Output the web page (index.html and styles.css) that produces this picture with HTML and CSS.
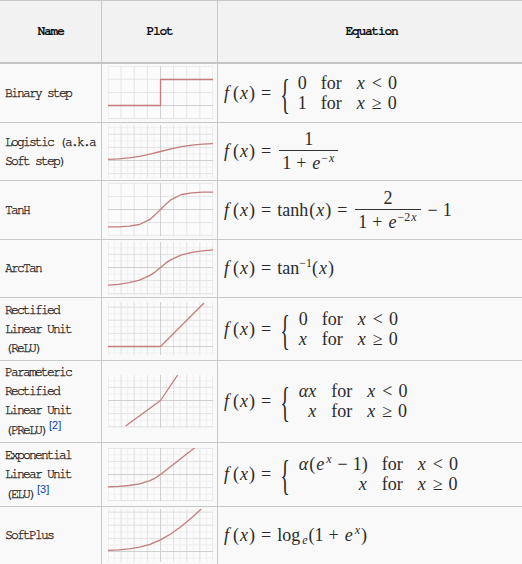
FILE: index.html
```html
<!DOCTYPE html>
<html>
<head>
<meta charset="utf-8" />
<title>Activation functions</title>
<link rel="stylesheet" href="styles.css">
</head>
<body>

<svg class="defs" width="0" height="0">
 <defs>
  <pattern id="minor" width="6.5625" height="6.5625" patternUnits="userSpaceOnUse">
   <rect width="1" height="6.5625" fill="#efefef"/>
   <rect width="6.5625" height="1" fill="#efefef"/>
  </pattern>
  <pattern id="major" width="13.125" height="13.125" patternUnits="userSpaceOnUse">
   <rect width="1" height="13.125" fill="#e3e3e3"/>
   <rect width="13.125" height="1" fill="#e3e3e3"/>
  </pattern>
 </defs>
</svg>

<table class="funcs">
<colgroup>
 <col class="c-name">
 <col class="c-plot">
 <col class="c-eq">
</colgroup>
<tr>
 <th>Name</th>
 <th>Plot</th>
 <th>Equation</th>
</tr>

<tr>
 <td class="name">Binary step</td>
 <td class="plot">
  <svg width="105" height="53" viewBox="0 0 105 53">
   <rect class="grid-major" x="-14" y="-14" width="135" height="81" transform="translate(12.625 12.75)"/>
   <path class="axis" d="M52.5 0V53M0 39.5H105"/>
   <path class="curve" d="M0 39.5H52.5V13.5H105"/>
  </svg>
 </td>
 <td class="eq">
  <span class="math"><span class="v f">f</span>(<span class="v">x</span>)<span class="rel">=</span>
   <span class="cases"><span class="brace">{</span>
    <span class="rows">
     <span>0</span><span>for</span><span><span class="v">x</span><span class="rel">&lt;</span>0</span>
     <span>1</span><span>for</span><span><span class="v">x</span><span class="rel">&ge;</span>0</span>
    </span>
   </span>
  </span>
 </td>
</tr>

<tr>
 <td class="name">Logistic (a.k.a<br>Soft step)</td>
 <td class="plot">
  <svg width="105" height="53" viewBox="0 0 105 53">
   <rect class="grid-minor" x="-14" y="-14" width="135" height="81" transform="translate(12.625 8.75)"/>
   <rect class="grid-major" x="-14" y="-14" width="135" height="81" transform="translate(12.625 8.75)"/>
   <path class="axis" d="M52.5 0V53M0 35.5H105"/>
   <polyline class="curve" points="0,34.3 10.5,33.8 21,32.8 31.5,31.3 42,29.1 52.5,26.5 63,23.9 73.5,21.7 84,20.2 94.5,19.2 105,18.7"/>
  </svg>
 </td>
 <td class="eq">
  <span class="math"><span class="v f">f</span>(<span class="v">x</span>)<span class="rel">=</span>
   <span class="frac"><span class="num">1</span><span class="den">1<span class="op">+</span><span class="v">e</span><sup>&minus;<span class="v">x</span></sup></span></span>
  </span>
 </td>
</tr>

<tr>
 <td class="name">TanH</td>
 <td class="plot">
  <svg width="105" height="53" viewBox="0 0 105 53">
   <rect class="grid-major" x="-14" y="-14" width="135" height="81" transform="translate(12.625 12.875)"/>
   <path class="axis" d="M52.5 0V53M0 26.5H105"/>
   <polyline class="curve" points="0,43.9 10.5,43.8 21,43.2 31.5,41.5 42,36.3 47,31.9 52.5,26.5 58,21.1 63,16.7 73.5,11.5 84,9.8 94.5,9.2 105,9.1"/>
  </svg>
 </td>
 <td class="eq">
  <span class="math"><span class="v f">f</span>(<span class="v">x</span>)<span class="rel">=</span><span class="fn">tanh</span>(<span class="v">x</span>)<span class="rel">=</span>
   <span class="frac"><span class="num">2</span><span class="den">1<span class="op">+</span><span class="v">e</span><sup>&minus;2<span class="v">x</span></sup></span></span><span class="op">&minus;</span>1
  </span>
 </td>
</tr>

<tr>
 <td class="name">ArcTan</td>
 <td class="plot">
  <svg width="105" height="53" viewBox="0 0 105 53">
   <rect class="grid-minor" x="-14" y="-14" width="135" height="81" transform="translate(12.625 11.875)"/>
   <rect class="grid-major" x="-14" y="-14" width="135" height="81" transform="translate(12.625 11.875)"/>
   <path class="axis" d="M52.5 0V53M0 25.5H105"/>
   <polyline class="curve" points="0,43.2 10.5,42.3 21,40.7 31.5,38.2 42,33.4 47,30.1 52.5,25.5 58,20.9 63,17.6 73.5,12.8 84,10.3 94.5,8.8 105,7.8"/>
  </svg>
 </td>
 <td class="eq">
  <span class="math"><span class="v f">f</span>(<span class="v">x</span>)<span class="rel">=</span><span class="fn">tan<sup>&minus;1</sup>(<span class="v">x</span>)</span></span>
 </td>
</tr>

<tr>
 <td class="name">Rectified<br>Linear Unit<br>(ReLU)</td>
 <td class="plot">
  <svg width="105" height="53" viewBox="0 0 105 53">
   <rect class="grid-minor" x="-14" y="-14" width="135" height="81" transform="translate(12.625 4.625)"/>
   <rect class="grid-major" x="-14" y="-14" width="135" height="81" transform="translate(12.625 4.625)"/>
   <path class="axis" d="M52.5 0V53M0 44.5H105"/>
   <path class="curve" d="M0 44.5H52.5L96 1"/>
  </svg>
 </td>
 <td class="eq">
  <span class="math"><span class="v f">f</span>(<span class="v">x</span>)<span class="rel">=</span>
   <span class="cases"><span class="brace">{</span>
    <span class="rows">
     <span>0</span><span>for</span><span><span class="v">x</span><span class="rel">&lt;</span>0</span>
     <span class="v">x</span><span>for</span><span><span class="v">x</span><span class="rel">&ge;</span>0</span>
    </span>
   </span>
  </span>
 </td>
</tr>

<tr>
 <td class="name">Parameteric<br>Rectified<br>Linear Unit<br>(PReLU)<sup class="ref">[2]</sup></td>
 <td class="plot">
  <svg width="105" height="53" viewBox="0 0 105 53">
   <rect class="grid-minor" x="-14" y="-14" width="135" height="81" transform="translate(12.625 11.875)"/>
   <rect class="grid-major" x="-14" y="-14" width="135" height="81" transform="translate(12.625 11.875)"/>
   <path class="axis" d="M52.5 0V53M0 25.5H105"/>
   <path class="curve" d="M17.7 51L52.5 25.5L69.7 0"/>
  </svg>
 </td>
 <td class="eq">
  <span class="math"><span class="v f">f</span>(<span class="v">x</span>)<span class="rel">=</span>
   <span class="cases"><span class="brace">{</span>
    <span class="rows">
     <span class="v">&alpha;x</span><span>for</span><span><span class="v">x</span><span class="rel">&lt;</span>0</span>
     <span class="v">x</span><span>for</span><span><span class="v">x</span><span class="rel">&ge;</span>0</span>
    </span>
   </span>
  </span>
 </td>
</tr>

<tr>
 <td class="name">Exponential<br>Linear Unit<br>(ELU)<sup class="ref">[3]</sup></td>
 <td class="plot">
  <svg width="105" height="53" viewBox="0 0 105 53">
   <rect class="grid-minor" x="-14" y="-14" width="135" height="81" transform="translate(12.625 12.875)"/>
   <rect class="grid-major" x="-14" y="-14" width="135" height="81" transform="translate(12.625 12.875)"/>
   <path class="axis" d="M52.5 0V53M0 26.5H105"/>
   <polyline class="curve" points="0,38.9 10.5,38.4 21,37.5 31.5,35.8 42,32.6 47,30.2 52.5,26.5 87,-0.5"/>
  </svg>
 </td>
 <td class="eq">
  <span class="math"><span class="v f">f</span>(<span class="v">x</span>)<span class="rel">=</span>
   <span class="cases"><span class="brace">{</span>
    <span class="rows">
     <span><span class="v">&alpha;</span>(<span class="v">e</span><sup><span class="v">x</span></sup><span class="op">&minus;</span>1)</span><span>for</span><span><span class="v">x</span><span class="rel">&lt;</span>0</span>
     <span class="v">x</span><span>for</span><span><span class="v">x</span><span class="rel">&ge;</span>0</span>
    </span>
   </span>
  </span>
 </td>
</tr>

<tr>
 <td class="name">SoftPlus</td>
 <td class="plot">
  <svg width="105" height="53" viewBox="0 0 105 53">
   <rect class="grid-minor" x="-14" y="-14" width="135" height="81" transform="translate(12.625 2.625)"/>
   <rect class="grid-major" x="-14" y="-14" width="135" height="81" transform="translate(12.625 2.625)"/>
   <path class="axis" d="M52.5 0V53M0 42.5H105"/>
   <polyline class="curve" points="0,41.4 10.5,40.9 21,39.9 31.5,38.2 42,35.3 52.5,30.9 63,24.8 73.5,17.2 84,8.4 93.3,0"/>
  </svg>
 </td>
 <td class="eq">
  <span class="math"><span class="v f">f</span>(<span class="v">x</span>)<span class="rel">=</span><span class="fn">log<sub class="v">e</sub>(1<span class="op">+</span><span class="v">e</span><sup><span class="v">x</span></sup>)</span></span>
 </td>
</tr>
</table>

</body>
</html>
```

FILE: styles.css
```css
html,
body
{
    margin: 0;
    overflow: hidden;
    background-color: #ffffff;
}

.defs
{
    position: absolute;
}

.funcs
{
    border-collapse: collapse;
    table-layout: fixed;
    width: 527px;
    margin-left: -1px;
    font-family: "Nimbus Mono PS", "FreeMono", "Courier New", "Liberation Mono", monospace;
    font-size: 13px;
    color: #111111;
    background-color: #f9f9f9;
}

.c-name { width: 102px; }
.c-plot { width: 116px; }

.funcs th,
.funcs td
{
    border: 1px solid #c8c8c8;
}

.funcs th
{
    height: 61px;
    padding: 0;
    background-color: #f2f2f2;
    border-bottom: 2px solid #c4c4c4;
    letter-spacing: -1.3px;
    font-weight: bold;
    color: #111111;
}

td.name
{
    padding: 2.5px 4px 2px 5px;
    line-height: 19px;
    letter-spacing: -1.8px;
    -webkit-text-stroke: 0.25px #111111;
}

sup.ref
{
    margin-left: 2px;
    font-family: "Liberation Sans", sans-serif;
    font-size: 11px;
    letter-spacing: 0;
    line-height: 1;
    vertical-align: 5px;
    color: #0645ad;
    -webkit-text-stroke: 0;
}

td.plot
{
    padding: 2px 4px 2.5px 6px;
}

td.plot svg
{
    display: block;
    background-color: #fbfbfb;
}

.grid-minor { fill: url(#minor); }
.grid-major { fill: url(#major); }

.axis
{
    fill: none;
    stroke: #d0d0d0;
    stroke-width: 1;
}

.curve
{
    fill: none;
    stroke: #c47c7c;
    stroke-width: 1.3;
    stroke-linejoin: round;
}

td.eq
{
    padding: 0 5px;
}

/* equations */
.math
{
    display: inline-flex;
    align-items: center;
    font-family: "Liberation Serif", serif;
    font-size: 18px;
    line-height: 20px;
    color: #2b2b2b;
    white-space: nowrap;
}

.math .v { font-style: italic; padding: 0 1px; }
.math .f { padding: 0 4px 0 1px; }
.math .rel { margin: 0 6px; }
.math .op { margin: 0 5px; }
.math .fn { margin-right: 1px; }

.math sup,
.math sub
{
    font-size: 12px;
    line-height: 0;
}

.math sup { vertical-align: 7px; }
.math sub { vertical-align: -3px; margin-left: 1px; }

.frac
{
    display: inline-flex;
    flex-direction: column;
    align-items: center;
    margin: 0 2px;
}

.frac .num
{
    align-self: stretch;
    text-align: center;
    padding-bottom: 1px;
    border-bottom: 1px solid #333333;
}

.frac .den
{
    padding: 2px 3px 0;
}

.cases
{
    display: inline-flex;
    align-items: center;
}

.brace
{
    display: inline-block;
    font-size: 20px;
    transform: scaleY(2.1);
    margin: 0 8px 0 3px;
}

.rows
{
    display: grid;
    grid-template-columns: auto auto auto;
    column-gap: 14px;
}

.rows > :nth-child(3n+1)
{
    text-align: right;
}
```
